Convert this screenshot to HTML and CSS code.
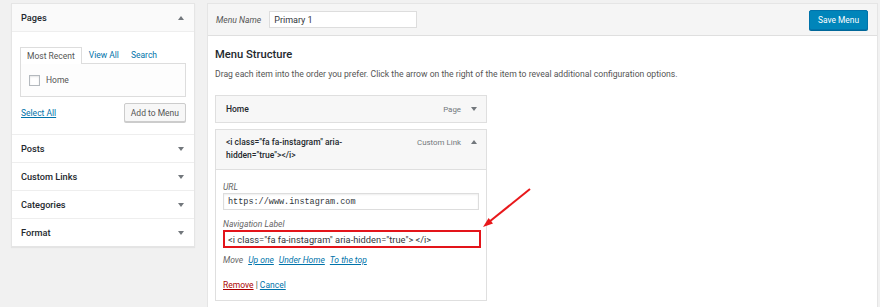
FILE: index.html
```html
<!DOCTYPE html>
<html lang="en">
<head>
  <meta charset="UTF-8">
  <title>Menus</title>
  <link rel="stylesheet" href="styles.css">
</head>
<body>
  <div class="page">
    <div class="sidebar">
      <div class="box-section open">
        <div class="box-head">
          <span>Pages</span>
          <span class="arrow up"></span>
        </div>
        <div class="box-body">
          <ul class="tabs">
            <li class="tab active">Most Recent</li>
            <li class="tab"><a href="#">View All</a></li>
            <li class="tab"><a href="#">Search</a></li>
          </ul>
          <div class="tab-panel">
            <label class="check"><span class="checkbox"></span>Home</label>
          </div>
          <div class="box-actions">
            <a href="#" class="select-all">Select All</a>
            <button class="btn">Add to Menu</button>
          </div>
        </div>
      </div>
      <div class="box-section">
        <div class="box-head"><span>Posts</span><span class="arrow"></span></div>
      </div>
      <div class="box-section">
        <div class="box-head"><span>Custom Links</span><span class="arrow"></span></div>
      </div>
      <div class="box-section">
        <div class="box-head"><span>Categories</span><span class="arrow"></span></div>
      </div>
      <div class="box-section">
        <div class="box-head"><span>Format</span><span class="arrow"></span></div>
      </div>
    </div>

    <div class="main">
      <div class="main-head">
        <label class="menu-name">Menu Name</label>
        <input type="text" class="name-input" value="Primary 1">
        <button class="btn-primary">Save Menu</button>
      </div>
      <div class="main-body">
        <h3>Menu Structure</h3>
        <p class="desc">Drag each item into the order you prefer. Click the arrow on the right of the item to reveal additional configuration options.</p>

        <div class="menu-item">
          <div class="item-bar">
            <span class="item-title">Home</span>
            <span class="item-type">Page</span>
            <span class="arrow"></span>
          </div>
        </div>

        <div class="menu-item">
          <div class="item-bar tall">
            <span class="item-title">&lt;i class="fa fa-instagram" aria-hidden="true"&gt;&lt;/i&gt;</span>
            <span class="item-type">Custom Link</span>
            <span class="arrow up"></span>
          </div>
          <div class="item-settings">
            <label class="field-label">URL</label>
            <input type="text" class="field mono" value="https://www.instagram.com">
            <label class="field-label">Navigation Label</label>
            <input type="text" class="field highlight" value='&lt;i class="fa fa-instagram" aria-hidden="true"&gt; &lt;/i&gt;'>
            <div class="move">
              <span class="move-label">Move</span>
              <a href="#">Up one</a>
              <a href="#">Under Home</a>
              <a href="#">To the top</a>
            </div>
            <div class="item-actions">
              <a href="#" class="remove">Remove</a> | <a href="#">Cancel</a>
            </div>
          </div>
        </div>
      </div>
    </div>
  </div>

  <svg class="pointer" width="70" height="60" viewBox="0 0 70 60">
    <line x1="55" y1="6" x2="14" y2="39" stroke="#e8181b" stroke-width="2"/>
    <polygon points="8,44 18,40.4 13.6,35" fill="#e8181b"/>
  </svg>
</body>
</html>
```

FILE: styles.css
```css
body {
  margin: 0;
  background: #f1f1f1;
  font-family: Roboto, "Open Sans", sans-serif;
  font-size: 8.5px;
  color: #444;
  overflow: hidden;
}
a {
  color: #0073aa;
}
.page {
  display: flex;
  align-items: flex-start;
  gap: 12px;
  padding: 3px 2px 0 11px;
}

/* left column */
.sidebar {
  width: 184px;
  flex-shrink: 0;
  background: #fff;
  border: 1px solid #e5e5e5;
  box-shadow: 0 1px 1px rgba(0, 0, 0, 0.05);
  box-sizing: border-box;
}
.box-section + .box-section {
  border-top: 1px solid #eee;
}
.box-head {
  height: 27px;
  display: flex;
  align-items: center;
  justify-content: space-between;
  padding: 0 10px 0 9px;
  font-size: 9.2px;
  font-weight: 500;
  color: #23282d;
}
.open .box-head {
  background: #fafafa;
  border-bottom: 1px solid #eee;
}
.arrow {
  width: 0;
  height: 0;
  border-left: 3px solid transparent;
  border-right: 3px solid transparent;
  border-top: 4px solid #72777c;
}
.arrow.up {
  border-top: 0;
  border-bottom: 4px solid #72777c;
}
.box-body {
  padding: 14px 8px 12px 8px;
}
.tabs {
  list-style: none;
  margin: 0;
  padding: 0;
  display: flex;
  height: 17px;
}
.tab {
  padding: 0 6px;
  display: flex;
  align-items: center;
  margin-right: 0;
}
.tab a {
  text-decoration: none;
}
.tab.active {
  border: 1px solid #ddd;
  border-bottom: 0;
  background: #fff;
  color: #555;
  position: relative;
  top: 1px;
  height: 16px;
}
.tab.active + .tab {
  margin-left: 1px;
}
.tab-panel {
  border: 1px solid #ddd;
  height: 32px;
  display: flex;
  align-items: center;
  padding: 0 8px;
  background: #fdfdfd;
}
.check {
  display: flex;
  align-items: center;
  gap: 6px;
  color: #555;
}
.checkbox {
  width: 9px;
  height: 9px;
  border: 1px solid #b4b9be;
  background: #fff;
  box-shadow: inset 0 1px 2px rgba(0, 0, 0, 0.1);
}
.box-actions {
  display: flex;
  justify-content: space-between;
  align-items: center;
  margin-top: 6px;
  padding-left: 1px;
}
.btn {
  font-family: inherit;
  font-size: 8.5px;
  color: #555;
  background: #f7f7f7;
  border: 1px solid #ccc;
  border-radius: 2px;
  box-shadow: 0 1px 0 #ccc;
  height: 19px;
  padding: 0 6px;
}

/* right column */
.main {
  flex: 1;
  background: #fff;
  border: 1px solid #e5e5e5;
  box-sizing: border-box;
  min-height: 304px;
}
.main-head {
  height: 31px;
  background: #f5f5f5;
  border-bottom: 1px solid #dfdfdf;
  display: flex;
  align-items: center;
  padding: 0 9px 0 8px;
}
.menu-name {
  font-style: italic;
  font-size: 8.6px;
  color: #555;
  margin-right: 8px;
}
.name-input {
  width: 148px;
  height: 17px;
  box-sizing: border-box;
  border: 1px solid #ddd;
  font-family: inherit;
  font-size: 9px;
  color: #32373c;
  padding: 0 4px;
}
.btn-primary {
  margin-left: auto;
  height: 20px;
  padding: 0 8px;
  background: #0085ba;
  border: 1px solid #0073aa;
  border-radius: 2px;
  box-shadow: 0 1px 0 #006799;
  color: #fff;
  font-family: inherit;
  font-size: 8.4px;
}
.main-body {
  padding: 11px 7px;
}
h3 {
  font-size: 11.2px;
  font-weight: 500;
  color: #23282d;
  margin: 0;
  line-height: 16px;
}
.desc {
  font-size: 8.65px;
  margin: 6px 0 16px;
  color: #555;
}
.menu-item {
  width: 272px;
  border: 1px solid #dfdfdf;
  box-sizing: border-box;
  margin-bottom: 6px;
}
.item-bar {
  background: #f7f7f7;
  height: 26px;
  display: flex;
  align-items: center;
  padding: 0 9px 0 10px;
}
.item-bar.tall {
  height: 40px;
  align-items: flex-start;
  padding-top: 6px;
  box-sizing: border-box;
  border-bottom: 1px solid #dfdfdf;
}
.item-title {
  font-weight: 500;
  color: #23282d;
  max-width: 126px;
  line-height: 13px;
}
.item-type {
  margin-left: auto;
  font-size: 7.9px;
  color: #72777c;
  margin-right: 10px;
  line-height: 13px;
}
.tall .arrow {
  margin-top: 4px;
}
.item-settings {
  padding: 11px 7px 9px;
}
.field-label {
  display: block;
  font-style: italic;
  color: #666;
  line-height: 12px;
}
.field {
  display: block;
  width: 256px;
  height: 17px;
  box-sizing: border-box;
  border: 1px solid #ddd;
  box-shadow: inset 0 1px 2px rgba(0, 0, 0, 0.07);
  padding: 0 4px;
  font-family: inherit;
  font-size: 9.3px;
  color: #32373c;
  margin-bottom: 8px;
}
.field.mono {
  font-family: "Liberation Mono", monospace;
  font-size: 8.5px;
}
.field.highlight {
  width: 258px;
  height: 18px;
  border: 2px solid #e3141a;
  box-shadow: none;
  padding: 0 3px;
  margin-bottom: 6px;
}
.move {
  display: flex;
  gap: 5px;
  line-height: 12px;
  margin-bottom: 13px;
}
.move-label,
.move a {
  font-style: italic;
  color: #666;
}
.move a {
  color: #0073aa;
}
.item-actions {
  line-height: 12px;
}
.item-actions a {
  color: #0073aa;
}
.item-actions a.remove {
  color: #a00;
}

.pointer {
  position: absolute;
  left: 475px;
  top: 183px;
}
```
